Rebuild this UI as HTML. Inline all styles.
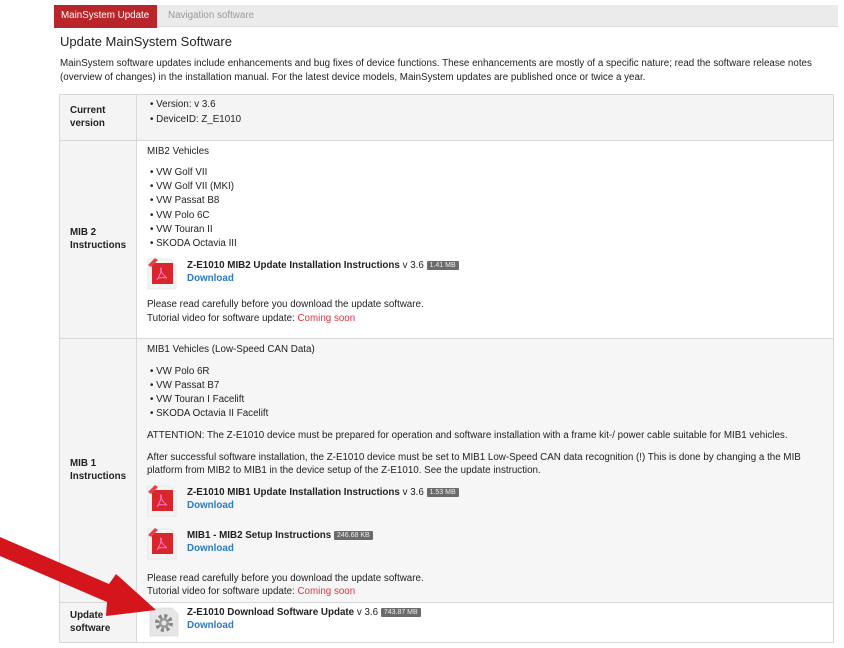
<!DOCTYPE html>
<html><head><meta charset="utf-8"><style>
*{margin:0;padding:0;box-sizing:border-box}
body{width:844px;height:648px;background:#fff;position:relative;overflow:hidden;font-family:"Liberation Sans",Arial,sans-serif;color:#222;font-size:9.8px}
.a{position:absolute;white-space:nowrap;line-height:12px}
.b{font-weight:bold}
.lnk{color:#2a7bc4;font-weight:bold}
.red{color:#e0343e}
.badge{display:inline-block;background:#6b6b6b;color:#eee;font-size:7px;line-height:9px;padding:0 3px;border-radius:1px;vertical-align:1px;font-weight:normal}
.cell{position:absolute;border:1px solid #d8d8d8}
.pdf{position:absolute;width:32px;height:34px}
</style></head><body>
<div style="position:absolute;left:54px;top:5px;width:784px;height:22px;background:#ebebeb;border-bottom:1px solid #ddd"></div>
<div style="position:absolute;left:54px;top:5px;width:103px;height:23px;background:#b8262b"></div>
<div class="a" style="left:61px;top:10px;color:#fff;font-size:9.8px">MainSystem Update</div>
<div class="a" style="left:168px;top:10px;color:#999">Navigation software</div>
<div class="a" style="left:60px;top:34px;font-size:13px;line-height:15px;color:#222">Update MainSystem Software</div>
<div class="a" style="left:60px;top:58px">MainSystem software updates include enhancements and bug fixes of device functions. These enhancements are mostly of a specific nature; read the software release notes</div>
<div class="a" style="left:60px;top:72px">(overview of changes) in the installation manual. For the latest device models, MainSystem updates are published once or twice a year.</div>

<div class="cell" style="left:59px;top:94px;width:775px;height:549px;background:#fff"></div>
<div style="position:absolute;left:60px;top:95px;width:773px;height:45px;background:#f4f4f4"></div>
<div style="position:absolute;left:60px;top:339px;width:773px;height:263px;background:#f6f6f6"></div>
<div style="position:absolute;left:60px;top:95px;width:76px;height:547px;background:#f4f4f4"></div>
<div style="position:absolute;left:136px;top:95px;width:1px;height:547px;background:#d8d8d8"></div>
<div style="position:absolute;left:60px;top:140px;width:773px;height:1px;background:#d8d8d8"></div>
<div style="position:absolute;left:60px;top:338px;width:773px;height:1px;background:#d8d8d8"></div>
<div style="position:absolute;left:60px;top:602px;width:773px;height:1px;background:#d8d8d8"></div>

<div class="a b" style="left:70px;top:105px">Current</div>
<div class="a b" style="left:70px;top:118px">version</div>
<div class="a" style="left:150px;top:99px">• Version: v 3.6</div>
<div class="a" style="left:150px;top:114px">• DeviceID: Z_E1010</div>

<div class="a b" style="left:70px;top:227px">MIB 2</div>
<div class="a b" style="left:70px;top:240px">Instructions</div>
<div class="a" style="left:147px;top:146px">MIB2 Vehicles</div>
<div class="a" style="left:150px;top:167px">• VW Golf VII</div>
<div class="a" style="left:150px;top:181px">• VW Golf VII (MKI)</div>
<div class="a" style="left:150px;top:195px">• VW Passat B8</div>
<div class="a" style="left:150px;top:210px">• VW Polo 6C</div>
<div class="a" style="left:150px;top:224px">• VW Touran II</div>
<div class="a" style="left:150px;top:238px">• SKODA Octavia III</div>
<svg class="pdf" style="left:146px;top:256px" viewBox="0 0 32 34"><path d="M2 3h22l6 6v24H2z" fill="#f4f4f4" stroke="#ddd" stroke-width=".6"/><path d="M6 7h21v21H6z" fill="#d9262c"/><path d="M2 9l7-7 3 2-7 7z" fill="#e3424a"/><path d="M11 24c4-7 5-11 4-12s-1 5 6 10c-5-1-10 0-9 1" fill="none" stroke="#f7c" stroke-width="1"/></svg>
<div class="a b" style="left:187px;top:260px">Z-E1010 MIB2 Update Installation Instructions <span style="font-weight:normal">v 3.6</span> <span class="badge">1.41 MB</span></div>
<div class="a lnk" style="left:187px;top:273px">Download</div>
<div class="a" style="left:147px;top:299px">Please read carefully before you download the update software.</div>
<div class="a" style="left:147px;top:313px">Tutorial video for software update: <span class="red">Coming soon</span></div>

<div class="a b" style="left:70px;top:458px">MIB 1</div>
<div class="a b" style="left:70px;top:471px">Instructions</div>
<div class="a" style="left:147px;top:344px">MIB1 Vehicles (Low-Speed CAN Data)</div>
<div class="a" style="left:150px;top:366px">• VW Polo 6R</div>
<div class="a" style="left:150px;top:380px">• VW Passat B7</div>
<div class="a" style="left:150px;top:394px">• VW Touran I Facelift</div>
<div class="a" style="left:150px;top:408px">• SKODA Octavia II Facelift</div>
<div class="a" style="left:147px;top:430px">ATTENTION: The Z-E1010 device must be prepared for operation and software installation with a frame kit-/ power cable suitable for MIB1 vehicles.</div>
<div class="a" style="left:147px;top:452px">After successful software installation, the Z-E1010 device must be set to MIB1 Low-Speed CAN data recognition (!) This is done by changing a the MIB</div>
<div class="a" style="left:147px;top:465px">platform from MIB2 to MIB1 in the device setup of the Z-E1010. See the update instruction.</div>
<svg class="pdf" style="left:146px;top:483px" viewBox="0 0 32 34"><path d="M2 3h22l6 6v24H2z" fill="#f4f4f4" stroke="#ddd" stroke-width=".6"/><path d="M6 7h21v21H6z" fill="#d9262c"/><path d="M2 9l7-7 3 2-7 7z" fill="#e3424a"/><path d="M11 24c4-7 5-11 4-12s-1 5 6 10c-5-1-10 0-9 1" fill="none" stroke="#f7c" stroke-width="1"/></svg>
<div class="a b" style="left:187px;top:487px">Z-E1010 MIB1 Update Installation Instructions <span style="font-weight:normal">v 3.6</span> <span class="badge">1.53 MB</span></div>
<div class="a lnk" style="left:187px;top:500px">Download</div>
<svg class="pdf" style="left:146px;top:526px" viewBox="0 0 32 34"><path d="M2 3h22l6 6v24H2z" fill="#f4f4f4" stroke="#ddd" stroke-width=".6"/><path d="M6 7h21v21H6z" fill="#d9262c"/><path d="M2 9l7-7 3 2-7 7z" fill="#e3424a"/><path d="M11 24c4-7 5-11 4-12s-1 5 6 10c-5-1-10 0-9 1" fill="none" stroke="#f7c" stroke-width="1"/></svg>
<div class="a b" style="left:187px;top:530px">MIB1 - MIB2 Setup Instructions <span class="badge">246.68 KB</span></div>
<div class="a lnk" style="left:187px;top:543px">Download</div>
<div class="a" style="left:147px;top:573px">Please read carefully before you download the update software.</div>
<div class="a" style="left:147px;top:586px">Tutorial video for software update: <span class="red">Coming soon</span></div>

<div class="a b" style="left:70px;top:610px">Update</div>
<div class="a b" style="left:70px;top:623px">software</div>
<svg style="position:absolute;left:148px;top:606px" width="32" height="32" viewBox="0 0 32 32"><path d="M2 2h22l6 6v22H2z" fill="#e6e6e6" stroke="#ccc" stroke-width=".5"/><circle cx="16" cy="17" r="7" fill="none" stroke="#888" stroke-width="4" stroke-dasharray="3 2.5"/><circle cx="16" cy="17" r="5" fill="#999"/><circle cx="16" cy="17" r="2.5" fill="#e6e6e6"/></svg>
<div class="a b" style="left:187px;top:607px">Z-E1010 Download Software Update <span style="font-weight:normal">v 3.6</span> <span class="badge">743.87 MB</span></div>
<div class="a lnk" style="left:187px;top:620px">Download</div>

<svg style="position:absolute;left:0;top:0" width="844" height="648"><path d="M0 537 L109 584 L116 574 L156 610 L106 616 L107 602 L0 556 Z" fill="#d4161c"/></svg>
</body></html>
